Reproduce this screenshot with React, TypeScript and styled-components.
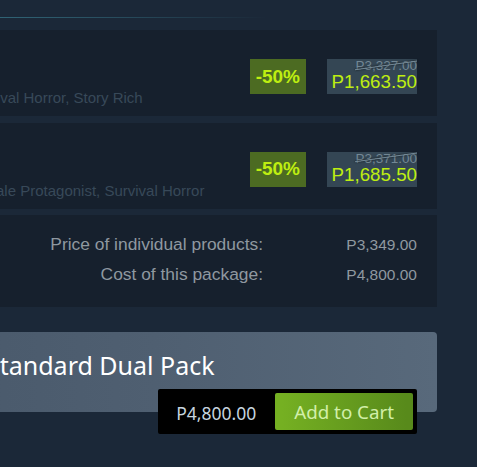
import React from "react";
import styled, { createGlobalStyle } from "styled-components";

const GlobalStyle = createGlobalStyle`
  html, body {
    margin: 0;
    padding: 0;
    background: #1b2838;
    overflow: hidden;
  }
  #root {
    width: 477px;
    height: 467px;
    overflow: hidden;
  }
`;

const Page = styled.div`
  width: 477px;
  height: 467px;
  overflow: hidden;
  background: #1b2838;
  font-family: Arial, "Liberation Sans", sans-serif;
`;

const Column = styled.div`
  margin-left: -34px;
  width: 471px;
  padding-top: 17px;
`;

const HeaderRule = styled.div`
  height: 1px;
  margin-bottom: 12px;
  background: linear-gradient(90deg, #326a7c 0%, rgba(50, 106, 124, 0.5) 35%, rgba(50, 106, 124, 0) 64%);
`;

const ItemList = styled.div`
  display: flex;
  flex-direction: column;
  gap: 6.25px;
`;

const ItemRow = styled.div`
  box-sizing: border-box;
  height: 86.25px;
  display: flex;
  align-items: flex-start;
  padding-right: 20px;
  background: #16202d;
`;

const Info = styled.div`
  flex: 1;
  min-width: 0;
  align-self: stretch;
  display: flex;
  flex-direction: column;
  justify-content: flex-end;
  padding-bottom: 10px;
`;

const Tags = styled.div`
  font-size: 15px;
  color: #384959;
  white-space: nowrap;
`;

const DiscountBlock = styled.div`
  display: flex;
  gap: 21px;
  height: 35px;
  margin-top: 29px;
`;

const Pct = styled.div`
  display: flex;
  align-items: center;
  padding: 0 5.5px;
  background: #4c6b22;
  color: #beee11;
  font-size: 19px;
  font-weight: 700;
`;

const Prices = styled.div`
  display: flex;
  flex-direction: column;
  align-items: flex-end;
  padding-left: 5px;
  background: #344654;
`;

const OrigPrice = styled.div`
  position: relative;
  font-size: 13.5px;
  line-height: 13px;
  color: #738895;

  &::before {
    content: "";
    position: absolute;
    left: 0;
    right: 0;
    top: 43%;
    border-bottom: 1.5px solid #738895;
    transform: skewY(-8deg);
    box-shadow: 0 0 2px black;
  }
`;

const FinalPrice = styled.div`
  font-size: 18.75px;
  line-height: 20px;
  color: #beee11;
`;

const Totals = styled.div`
  display: grid;
  grid-template-columns: 1fr 154px;
  grid-auto-rows: 30px;
  align-items: baseline;
  padding: 14px 20px 18px;
  background: #16202d;
  color: #8f98a0;
  line-height: 30px;
`;

const TotalLabel = styled.div`
  text-align: right;
  font-size: 17.4px;
`;

const TotalValue = styled.div`
  text-align: right;
  font-size: 15.5px;
`;

const BuyBox = styled.div`
  position: relative;
  box-sizing: border-box;
  height: 80px;
  margin-top: 25px;
  padding: 16px 20px 0;
  border-radius: 4px;
  background: linear-gradient(90deg, #4a5a6c 0%, #4f5f71 40%, #58697b 100%);
`;

const BuyTitle = styled.h1`
  margin: 0;
  font-family: "Noto Sans", "Open Sans", sans-serif;
  font-size: 25px;
  font-weight: 400;
  line-height: 34px;
  color: #ffffff;
  white-space: nowrap;
`;

const ActionBar = styled.div`
  position: absolute;
  right: 20px;
  bottom: -22px;
  box-sizing: border-box;
  height: 45px;
  display: flex;
  align-items: center;
  padding: 4px 4px 4px 0;
  border-radius: 2px;
  background: #000000;
`;

const ActionPrice = styled.div`
  padding: 2px 19px 0 18px;
  font-family: "Noto Sans", "Open Sans", sans-serif;
  font-size: 17.5px;
  color: #c6d4df;
`;

const CartButton = styled.button`
  height: 37px;
  display: flex;
  align-items: center;
  padding: 0 19px;
  border: none;
  border-radius: 2px;
  background: linear-gradient(90deg, #75b022 5%, #588a1b 95%);
  color: #d2efa9;
  font-family: "Noto Sans", "Open Sans", sans-serif;
  font-size: 18.75px;
  cursor: pointer;
`;

type Item = { tags: string; pct: string; orig: string; final: string };

const items: Item[] = [
  { tags: "Survival Horror, Story Rich", pct: "-50%", orig: "P3,327.00", final: "P1,663.50" },
  { tags: "Female Protagonist, Survival Horror", pct: "-50%", orig: "P3,371.00", final: "P1,685.50" },
];

export default function App() {
  return (
    <Page>
      <GlobalStyle />
      <Column>
        <HeaderRule />
        <ItemList>
          {items.map((it) => (
            <ItemRow key={it.orig}>
              <Info>
                <Tags>{it.tags}</Tags>
              </Info>
              <DiscountBlock>
                <Pct>{it.pct}</Pct>
                <Prices>
                  <OrigPrice>{it.orig}</OrigPrice>
                  <FinalPrice>{it.final}</FinalPrice>
                </Prices>
              </DiscountBlock>
            </ItemRow>
          ))}
          <Totals>
            <TotalLabel>Price of individual products:</TotalLabel>
            <TotalValue>P3,349.00</TotalValue>
            <TotalLabel>Cost of this package:</TotalLabel>
            <TotalValue>P4,800.00</TotalValue>
          </Totals>
        </ItemList>
        <BuyBox>
          <BuyTitle>Standard Dual Pack</BuyTitle>
          <ActionBar>
            <ActionPrice>P4,800.00</ActionPrice>
            <CartButton>Add to Cart</CartButton>
          </ActionBar>
        </BuyBox>
      </Column>
    </Page>
  );
}
